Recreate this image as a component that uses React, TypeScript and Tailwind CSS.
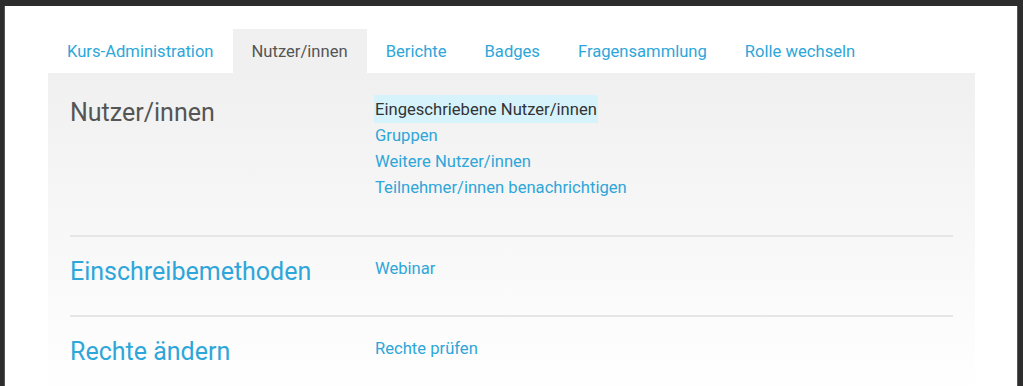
import React from "react";

const tabs = [
  "Kurs-Administration",
  "Nutzer/innen",
  "Berichte",
  "Badges",
  "Fragensammlung",
  "Rolle wechseln",
];

const Row = ({
  title,
  active,
  links,
  first,
}: {
  title: string;
  active?: boolean;
  links: { label: string; current?: boolean }[];
  first?: boolean;
}) => (
  <div
    className={
      "flex " +
      (first ? "pt-[22px] pb-[24px]" : "pt-[17px] pb-[26px] border-t-2 border-[#e6e6e6]")
    }
  >
    <div
      className={
        "w-[305px] shrink-0 pt-[1px] text-[25px] leading-[34px] " +
        (active ? "text-[#555555]" : "text-[#2ea6d9]")
      }
    >
      {title}
    </div>
    <ul className={"flex flex-col text-[16.6px] leading-[26px] " + (links.length > 1 ? "mb-[10px]" : "pt-[2px]")}>
      {links.map((l) => (
        <li key={l.label}>
          <a
            className={
              l.current
                ? "inline-block -ml-[1px] pl-[1px] pr-[1px] pt-[2px] bg-[#d6f3fc] text-[#333333]"
                : "text-[#2ea6d9]"
            }
          >
            {l.label}
          </a>
        </li>
      ))}
    </ul>
  </div>
);

export default function App() {
  return (
    <div
      className="h-screen bg-[#2d2d2d] pt-[6px] pl-[4px] pr-[5px] overflow-hidden"
      style={{ fontFamily: "Roboto, 'Liberation Sans', sans-serif" }}
    >
      <div className="h-full bg-white border-l border-r border-[#555555] pt-[23px] pl-[43px] pr-[42px] flex flex-col">
        <nav className="flex">
          {tabs.map((t) => (
            <div
              key={t}
              className={
                "px-[19px] h-[44px] pt-[2px] flex items-center text-[16.6px] " +
                (t === "Nutzer/innen" ? "bg-[#f0f0f0] text-[#555555]" : "text-[#2ea6d9]")
              }
            >
              {t}
            </div>
          ))}
        </nav>
        <div className="flex-1 bg-linear-to-b from-[#f0f0f0] to-white px-[22px]">
          <Row
            first
            active
            title="Nutzer/innen"
            links={[
              { label: "Eingeschriebene Nutzer/innen", current: true },
              { label: "Gruppen" },
              { label: "Weitere Nutzer/innen" },
              { label: "Teilnehmer/innen benachrichtigen" },
            ]}
          />
          <Row title="Einschreibemethoden" links={[{ label: "Webinar" }]} />
          <Row title="Rechte ändern" links={[{ label: "Rechte prüfen" }]} />
        </div>
      </div>
    </div>
  );
}
